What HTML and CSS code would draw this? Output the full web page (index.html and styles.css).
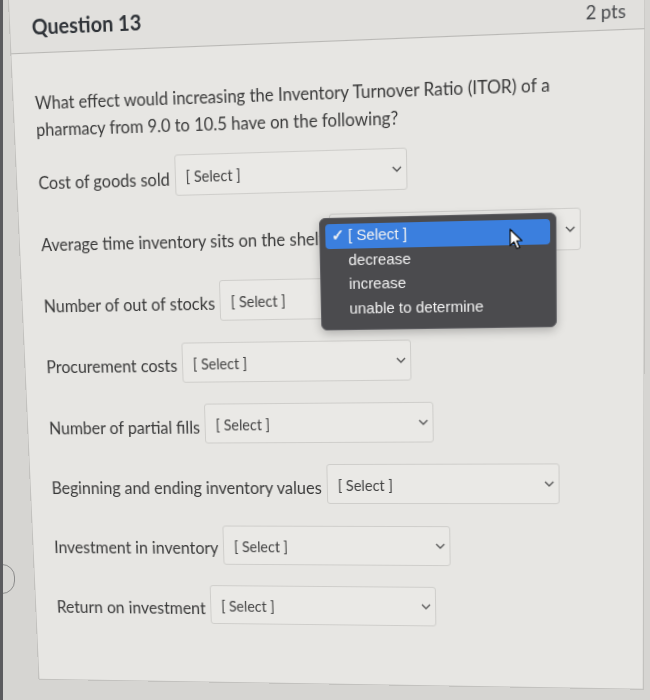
FILE: index.html
```html
<!DOCTYPE html>
<html lang="en">
<head>
    <meta charset="UTF-8">
    <meta name="viewport" content="width=device-width, initial-scale=1.0">
    <title>Question 13</title>
    <link rel="stylesheet" href="styles.css">
</head>
<body>
    <div class="page">
        <div class="gutter">
            <div class="side-tab"></div>
        </div>
        <div class="quiz-card">
            <div class="q-header">
                <h2 class="q-title">Question 13</h2>
                <span class="q-points">2 pts</span>
            </div>
            <div class="q-body">
                <p class="q-text">What effect would increasing the Inventory Turnover Ratio (ITOR) of a pharmacy from 9.0 to 10.5 have on the following?</p>

                <div class="answer-row">
                    <span class="answer-label">Cost of goods sold</span>
                    <div class="fake-select">
                        <span class="select-value">[ Select ]</span>
                        <svg class="chevron" width="10" height="6" viewBox="0 0 10 6"><path d="M1 1 L5 5 L9 1" fill="none" stroke="#5a5a5a" stroke-width="1.4"/></svg>
                    </div>
                </div>

                <div class="answer-row">
                    <span class="answer-label">Average time inventory sits on the shelf</span>
                    <div class="fake-select wide">
                        <span class="select-value">[ Select ]</span>
                        <svg class="chevron" width="10" height="6" viewBox="0 0 10 6"><path d="M1 1 L5 5 L9 1" fill="none" stroke="#5a5a5a" stroke-width="1.4"/></svg>
                        <!-- open dropdown menu -->
                        <div class="dropdown">
                            <div class="dd-item active"><span class="dd-check">&#10003;</span>[ Select ]</div>
                            <div class="dd-item">decrease</div>
                            <div class="dd-item">increase</div>
                            <div class="dd-item">unable to determine</div>
                            <svg class="cursor" width="14" height="21" viewBox="0 0 14 21"><path d="M1 1 L1 16.5 L4.6 13 L7.4 19.5 L10 18.4 L7.3 12 L12.2 12 Z" fill="#fff" stroke="#111" stroke-width="1.2" stroke-linejoin="round"/></svg>
                        </div>
                    </div>
                </div>

                <div class="answer-row">
                    <span class="answer-label">Number of out of stocks</span>
                    <div class="fake-select">
                        <span class="select-value">[ Select ]</span>
                        <svg class="chevron" width="10" height="6" viewBox="0 0 10 6"><path d="M1 1 L5 5 L9 1" fill="none" stroke="#5a5a5a" stroke-width="1.4"/></svg>
                    </div>
                </div>

                <div class="answer-row">
                    <span class="answer-label">Procurement costs</span>
                    <div class="fake-select">
                        <span class="select-value">[ Select ]</span>
                        <svg class="chevron" width="10" height="6" viewBox="0 0 10 6"><path d="M1 1 L5 5 L9 1" fill="none" stroke="#5a5a5a" stroke-width="1.4"/></svg>
                    </div>
                </div>

                <div class="answer-row">
                    <span class="answer-label">Number of partial fills</span>
                    <div class="fake-select">
                        <span class="select-value">[ Select ]</span>
                        <svg class="chevron" width="10" height="6" viewBox="0 0 10 6"><path d="M1 1 L5 5 L9 1" fill="none" stroke="#5a5a5a" stroke-width="1.4"/></svg>
                    </div>
                </div>

                <div class="answer-row">
                    <span class="answer-label">Beginning and ending inventory values</span>
                    <div class="fake-select">
                        <span class="select-value">[ Select ]</span>
                        <svg class="chevron" width="10" height="6" viewBox="0 0 10 6"><path d="M1 1 L5 5 L9 1" fill="none" stroke="#5a5a5a" stroke-width="1.4"/></svg>
                    </div>
                </div>

                <div class="answer-row">
                    <span class="answer-label">Investment in inventory</span>
                    <div class="fake-select">
                        <span class="select-value">[ Select ]</span>
                        <svg class="chevron" width="10" height="6" viewBox="0 0 10 6"><path d="M1 1 L5 5 L9 1" fill="none" stroke="#5a5a5a" stroke-width="1.4"/></svg>
                    </div>
                </div>

                <div class="answer-row">
                    <span class="answer-label">Return on investment</span>
                    <div class="fake-select">
                        <span class="select-value">[ Select ]</span>
                        <svg class="chevron" width="10" height="6" viewBox="0 0 10 6"><path d="M1 1 L5 5 L9 1" fill="none" stroke="#5a5a5a" stroke-width="1.4"/></svg>
                    </div>
                </div>
            </div>
        </div>
    </div>
</body>
</html>
```

FILE: styles.css
```css
body {
    margin: 0;
    padding: 0;
    height: 700px;
    overflow: hidden;
    background-color: #d6d5d2;
    border-left: 3px solid #5b5b5e;
    font-family: Lato, "Open Sans", sans-serif;
    color: #3a3a3a;
}
.page {
    display: flex;
}
.gutter {
    width: 18px;
    flex-shrink: 0;
}
.side-tab {
    margin-top: 564px;
    margin-left: -18px;
    width: 28px;
    height: 28px;
    border: 1px solid #8c8c8c;
    border-radius: 13px;
}
/* card is tilted a bit to follow the photo of the screen */
.quiz-card {
    width: 616px;
    height: 704px;
    margin-top: -16px;
    flex-shrink: 0;
    box-sizing: border-box;
    background-color: #e7e6e3;
    border: 1px solid #c3c2bf;
    transform-origin: 309px 511px;
    transform: perspective(1000px) rotateY(-5deg) rotateX(-4.5deg) skewX(0.86deg);
}
.q-header {
    height: 71px;
    box-sizing: border-box;
    display: flex;
    align-items: flex-start;
    justify-content: space-between;
    padding: 33px 17px 0 22px;
    background-color: #e1e0dd;
    border-bottom: 1px solid #b9b8b5;
}
.q-title {
    margin: 0;
    font-size: 20px;
    line-height: 24px;
    font-weight: 700;
    color: #2f3338;
}
.q-points {
    font-size: 17px;
    line-height: 24px;
    color: #47494c;
    padding-top: 9px;
}
.q-body {
    padding: 35px 0 0 22px;
}
.q-text {
    margin: 0;
    max-width: 560px;
    font-size: 16.5px;
    line-height: 26px;
}
.answer-row {
    display: flex;
    align-items: center;
    height: 40px;
    margin-top: 21.3px;
}
.q-text + .answer-row {
    margin-top: 15px;
}
.answer-label {
    font-size: 16.5px;
    padding-top: 7px;
    margin-right: 5px;
    white-space: nowrap;
}
.fake-select {
    position: relative;
    width: 229px;
    height: 40px;
    box-sizing: border-box;
    display: flex;
    align-items: center;
    justify-content: space-between;
    padding: 0 4px 0 10px;
    background-color: #eae9e6;
    border: 1px solid #cfcecb;
    border-radius: 3px;
}
.fake-select.wide {
    width: 242px;
}
.select-value {
    font-size: 14.5px;
    color: #444;
    padding-top: 3px;
}
.dropdown {
    position: absolute;
    left: -11px;
    top: 3px;
    width: 229px;
    box-sizing: border-box;
    padding: 5px 5px 8px;
    background-color: #4b4b4e;
    border: 1px solid #5e5e62;
    border-radius: 6px;
    box-shadow: 0 3px 10px rgba(0, 0, 0, 0.25);
    font-family: "Liberation Sans", Arial, sans-serif;
    font-size: 14.8px;
    color: #f2f2f2;
    z-index: 5;
}
.dd-item {
    height: 23.5px;
    line-height: 23.5px;
    padding-left: 22px;
    border-radius: 4px;
}
.dd-item.active {
    background-color: #3b7fde;
    padding-left: 6px;
}
.dd-check {
    display: inline-block;
    width: 16px;
    font-weight: 700;
}
.cursor {
    position: absolute;
    left: 183px;
    top: 13px;
}
```
